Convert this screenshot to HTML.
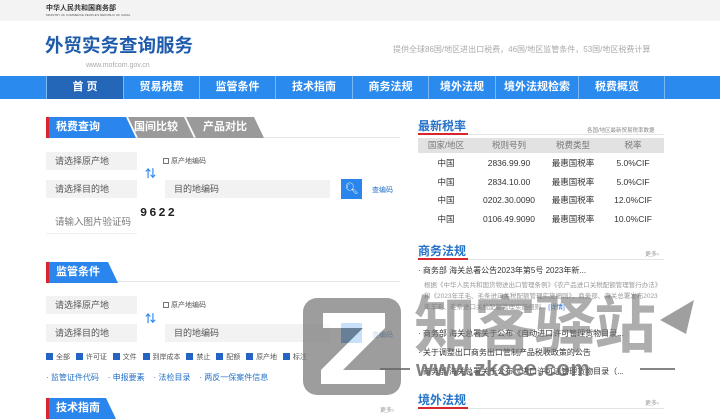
<!DOCTYPE html><html><head><meta charset="utf-8"><style>
*{margin:0;padding:0;box-sizing:border-box}
body{width:720px;height:413px;overflow:hidden;background:#fff;font-family:"Liberation Sans","Noto Sans CJK SC",sans-serif;position:relative;color:#333}
.a{position:absolute}
.top{left:0;top:0;width:720px;height:21px;background:#f3f3f3}
.nav{left:0;top:76px;width:720px;height:23px;background:#2b8aee}
.nav div{position:absolute;top:0;height:23px;line-height:23px;color:#fff;font-size:11px;font-weight:bold;text-align:center;border-left:1px solid #7cb8f5}
.inp{background:#f2f2f2;font-size:9px;color:#555;line-height:18px;padding-left:9px;height:18px}
.tab{height:21px;line-height:21px;color:#fff;font-size:11px;font-weight:bold}
.ttl{font-size:12px;font-weight:bold;color:#2572c9}
.cb{display:inline-block;width:7px;height:7px;background:#2563c4;margin-right:3px;vertical-align:-1px}
.tbl{font-size:8.5px;color:#333;text-align:center}
</style></head><body>
<div class="a top"></div>
<div class="a" style="left:46px;top:3px;font-size:7px;font-weight:bold;color:#333">中华人民共和国商务部</div>
<div class="a" style="left:46px;top:13px;font-size:3px;color:#555">MINISTRY OF COMMERCE PEOPLE'S REPUBLIC OF CHINA</div>
<div class="a" style="left:45px;top:33px;font-size:18.5px;font-weight:bold;color:#1f5bab;line-height:26px">外贸实务查询服务</div>
<div class="a" style="left:86px;top:62px;font-size:7px;color:#aaa">www.mofcom.gov.cn</div>
<div class="a" style="left:393px;top:44px;font-size:8px;color:#aaa">提供全球86国/地区进出口税费，46国/地区监管条件，53国/地区税费计算</div>
<div class="a nav">
<div style="left:46px;width:77px;background:#2466b8">首 页</div>
<div style="left:123px;width:76px">贸易税费</div>
<div style="left:199px;width:76px">监管条件</div>
<div style="left:275px;width:77px">技术指南</div>
<div style="left:352px;width:76px">商务法规</div>
<div style="left:428px;width:67px">境外法规</div>
<div style="left:495px;width:83px">境外法规检索</div>
<div style="left:578px;width:77px">税费概览</div>
<div style="left:664px;width:56px"></div>
</div>
<div class="a" style="left:46px;top:137px;width:354px;height:1px;background:#e4e4e4"></div>
<svg class="a" style="left:46px;top:117px" width="220" height="21"><polygon points="0,0 80,0 90,21 0,21" fill="#2a86ec"/><rect width="3" height="21" fill="#d9262c"/><polygon points="82,0 138,0 148,21 92,21" fill="#9a9a9a"/><polygon points="140,0 208,0 218,21 150,21" fill="#9a9a9a"/></svg>
<div class="a tab" style="left:56px;top:117px">税费查询</div>
<div class="a tab" style="left:134px;top:117px">国间比较</div>
<div class="a tab" style="left:203px;top:117px">产品对比</div>
<div class="a inp" style="left:46px;top:152px;width:91px">请选择原产地</div>
<div class="a inp" style="left:46px;top:180px;width:91px">请选择目的地</div>
<div class="a" style="left:145px;top:165px;font-size:11px;color:#2a86ec;font-weight:bold">⇅</div>
<div class="a" style="left:163px;top:156px;font-size:7px;color:#555"><span style="display:inline-block;width:6px;height:6px;border:1px solid #777;vertical-align:-1px"></span> 原产地编码</div>
<div class="a inp" style="left:165px;top:180px;width:165px">目的地编码</div>
<div class="a" style="left:341px;top:179px;width:21px;height:20px;background:#2a86ec;color:#fff;font-size:11px;text-align:center;line-height:20px">&#x1F50D;&#xFE0E;</div>
<div class="a" style="left:372px;top:185px;font-size:7px;color:#2572c9">查编码</div>
<div class="a" style="left:46px;top:211px;width:91px;height:23px;border-bottom:1px solid #eee;font-size:9.5px;color:#777;line-height:23px;padding-left:9px">请输入图片验证码</div>
<div class="a" style="left:140px;top:206px;width:52px;height:20px;font-size:12px;font-weight:bold;letter-spacing:2px;color:#222;font-family:'Liberation Mono',monospace">9622</div>
<div class="a" style="left:46px;top:281px;width:354px;height:1px;background:#e4e4e4"></div>
<svg class="a" style="left:46px;top:262px" width="80" height="21"><polygon points="0,0 62,0 72,21 0,21" fill="#2a86ec"/><rect width="3" height="21" fill="#d9262c"/></svg>
<div class="a tab" style="left:56px;top:262px">监管条件</div>
<div class="a inp" style="left:46px;top:296px;width:91px">请选择原产地</div>
<div class="a inp" style="left:46px;top:324px;width:91px">请选择目的地</div>
<div class="a" style="left:145px;top:310px;font-size:11px;color:#2a86ec;font-weight:bold">⇅</div>
<div class="a" style="left:163px;top:300px;font-size:7px;color:#555"><span style="display:inline-block;width:6px;height:6px;border:1px solid #777;vertical-align:-1px"></span> 原产地编码</div>
<div class="a inp" style="left:165px;top:324px;width:165px">目的地编码</div>
<div class="a" style="left:341px;top:323px;width:21px;height:20px;background:#2a86ec"></div>
<div class="a" style="left:372px;top:330px;font-size:7px;color:#2572c9">查编码</div>
<div class="a" style="left:46px;top:352px;font-size:7px;color:#555;white-space:nowrap">
<span class="cb"></span>全部&nbsp;&nbsp;&nbsp;<span class="cb"></span>许可证&nbsp;&nbsp;&nbsp;<span class="cb"></span>文件&nbsp;&nbsp;&nbsp;<span class="cb"></span>到岸成本&nbsp;&nbsp;&nbsp;<span class="cb"></span>禁止&nbsp;&nbsp;&nbsp;<span class="cb"></span>配额&nbsp;&nbsp;&nbsp;<span class="cb"></span>原产地&nbsp;&nbsp;&nbsp;<span class="cb"></span>标注</div>
<div class="a" style="left:46px;top:372px;font-size:8px;color:#2572c9;white-space:nowrap">· 监管证件代码&nbsp;&nbsp;&nbsp;&nbsp;· 申报要素&nbsp;&nbsp;&nbsp;&nbsp;· 法检目录&nbsp;&nbsp;&nbsp;&nbsp;· 两反一保案件信息</div>
<svg class="a" style="left:46px;top:398px" width="80" height="21"><polygon points="0,0 60,0 70,21 0,21" fill="#2a86ec"/><rect width="3" height="21" fill="#d9262c"/></svg>
<div class="a tab" style="left:56px;top:398px">技术指南</div>
<div class="a" style="left:380px;top:405px;font-size:6px;color:#999">更多›</div>
<div class="a ttl" style="left:418px;top:117px">最新税率</div>
<div class="a" style="left:418px;top:134px;width:246px;height:1px;background:#e4e4e4"></div>
<div class="a" style="left:418px;top:133px;width:50px;height:2px;background:#d9262c"></div>
<div class="a" style="left:587px;top:126px;font-size:5.5px;color:#888">各国/地区最新贸易税率数据</div>
<div class="a" style="left:418px;top:138px;width:246px;height:15px;background:#e2e2e2"></div>
<div class="a tbl" style="left:418px;top:138px;width:246px;line-height:15px;color:#777;display:flex"><span style="width:56px">国家/地区</span><span style="width:70px">税则号列</span><span style="width:58px">税费类型</span><span style="width:62px">税率</span></div>
<div class="a tbl" style="left:418px;top:154px;width:246px;line-height:18.7px">
<div style="display:flex"><span style="width:56px">中国</span><span style="width:70px">2836.99.90</span><span style="width:58px">最惠国税率</span><span style="width:62px">5.0%CIF</span></div>
<div style="display:flex"><span style="width:56px">中国</span><span style="width:70px">2834.10.00</span><span style="width:58px">最惠国税率</span><span style="width:62px">5.0%CIF</span></div>
<div style="display:flex"><span style="width:56px">中国</span><span style="width:70px">0202.30.0090</span><span style="width:58px">最惠国税率</span><span style="width:62px">12.0%CIF</span></div>
<div style="display:flex"><span style="width:56px">中国</span><span style="width:70px">0106.49.9090</span><span style="width:58px">最惠国税率</span><span style="width:62px">10.0%CIF</span></div>
</div>
<div class="a ttl" style="left:418px;top:242px">商务法规</div>
<div class="a" style="left:418px;top:259px;width:246px;height:1px;background:#e4e4e4"></div>
<div class="a" style="left:418px;top:258px;width:50px;height:2px;background:#d9262c"></div>
<div class="a" style="left:645px;top:249px;font-size:6px;color:#999">更多›</div>
<div class="a" style="left:418px;top:265px;font-size:8px;color:#333">· 商务部 海关总署公告2023年第5号 2023年新...</div>
<div class="a" style="left:424px;top:280px;width:240px;font-size:6.5px;line-height:11px;color:#999">根据《中华人民共和国货物进出口管理条例》《农产品进口关税配额管理暂行办法》和《2023年羊毛、毛条进口关税配额管理实施细则》，商务部、海关总署发布2023年羊毛、毛条进口关税配额管理实施细则... <span style="color:#2572c9">[详情]</span></div>
<div class="a" style="left:418px;top:328px;font-size:8px;color:#333">· 商务部 海关总署关于公布《自动进口许可管理货物目录...</div>
<div class="a" style="left:418px;top:347px;font-size:8px;color:#333">· 关于调整出口商务出口管制产品税收政策的公告</div>
<div class="a" style="left:418px;top:366px;font-size:8px;color:#333">· 商务部 海关总署关于公布《进口许可证管理货物目录（...</div>
<div class="a ttl" style="left:418px;top:391px">境外法规</div>
<div class="a" style="left:418px;top:408px;width:246px;height:1px;background:#e4e4e4"></div>
<div class="a" style="left:418px;top:407px;width:50px;height:2px;background:#d9262c"></div>
<div class="a" style="left:645px;top:398px;font-size:6px;color:#999">更多›</div>
<svg class="a" style="left:303px;top:298px;opacity:0.75" width="100" height="98"><rect x="0" y="0" width="98" height="97" rx="14" fill="#7d7d7d"/><polygon points="20,15 82,15 82,30 40,72 82,72 82,86 18,86 18,72 60,30 20,30" fill="#fff"/></svg>
<div class="a" style="left:414px;top:294px;font-size:62px;font-weight:bold;color:#777;opacity:0.6;letter-spacing:-2px;line-height:66px">知客驿站</div>
<svg class="a" style="left:660px;top:300px;opacity:0.7" width="40" height="35"><polygon points="0,20 34,0 26,34" fill="#777"/></svg>
<div class="a" style="left:380px;top:368px;width:30px;height:2px;background:#666;opacity:0.8"></div>
<div class="a" style="left:416px;top:356px;font-size:22px;font-weight:bold;color:#666;opacity:0.8;letter-spacing:0.5px">www.zkcee.com</div>
<div class="a" style="left:640px;top:368px;width:35px;height:2px;background:#666;opacity:0.8"></div>
</body></html>
